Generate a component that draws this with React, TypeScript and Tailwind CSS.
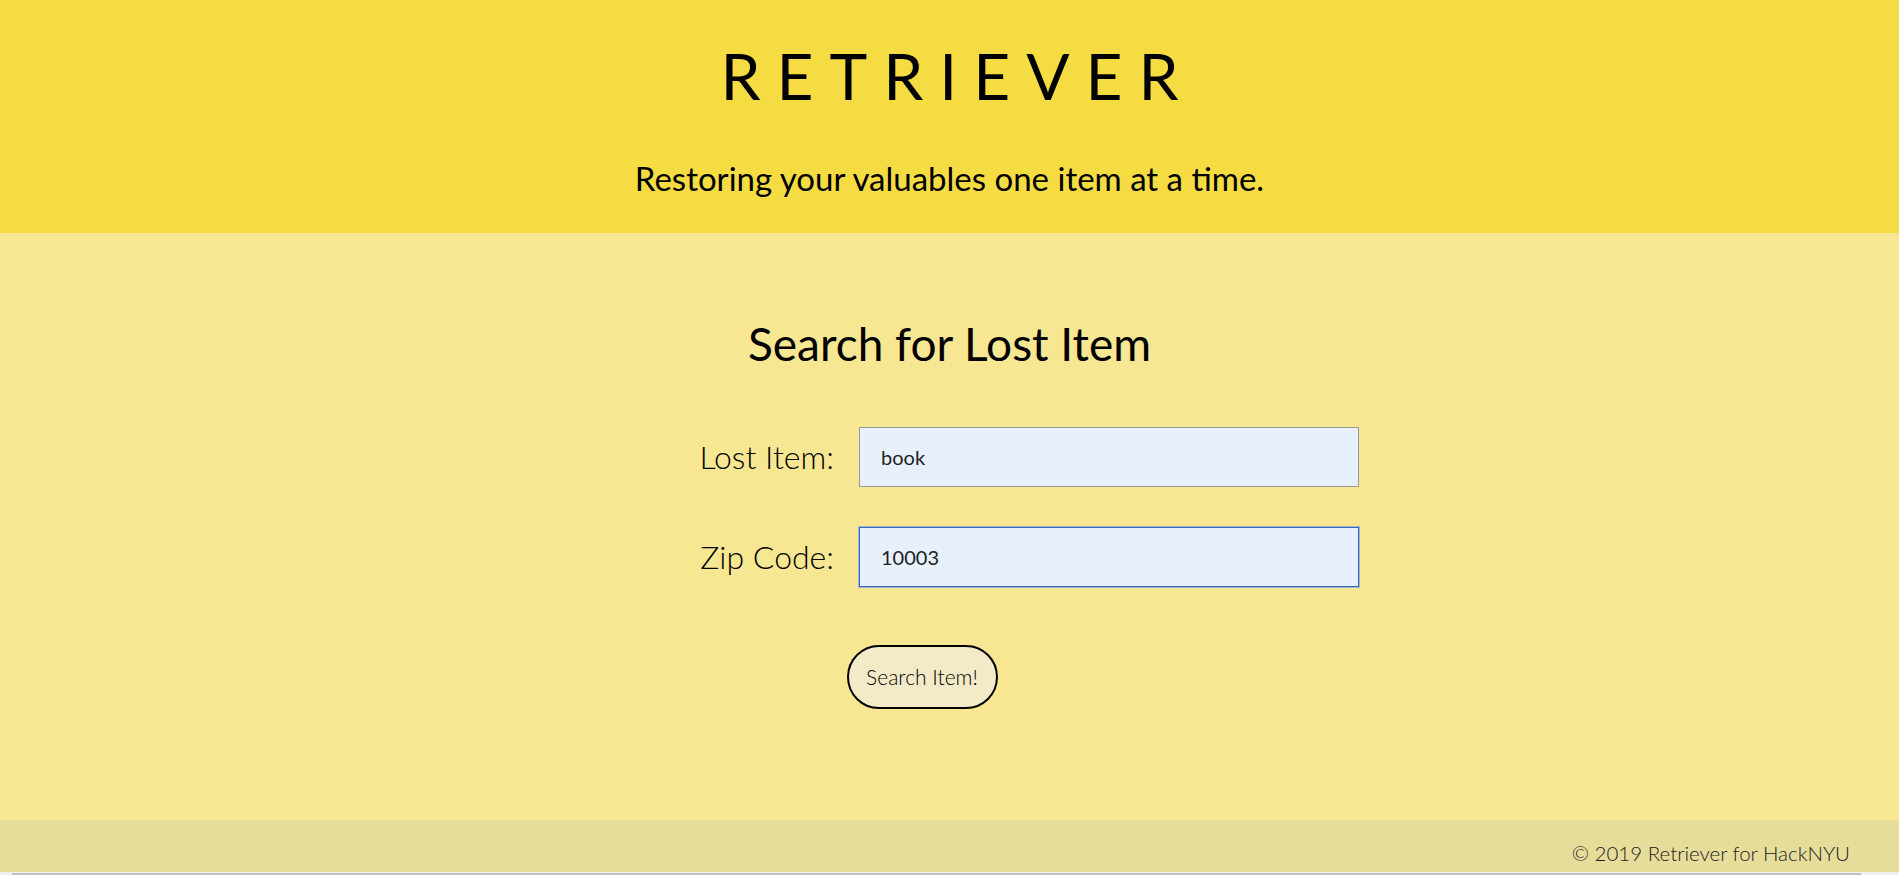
import React from "react";

export default function App() {
  const font = { fontFamily: "Lato, 'Open Sans', sans-serif" };
  return (
    <div className="w-full h-[875px] flex flex-col overflow-hidden" style={font}>
      <header className="h-[233px] bg-[#f5dc43] flex flex-col items-center text-black">
        <h1 className="mt-[37px] text-[64px] leading-[77px] font-normal tracking-[0.25em] pl-[0.25em]">RETRIEVER</h1>
        <p className="mt-[44px] text-[33px] leading-[40px]">Restoring your valuables one item at a time.</p>
      </header>
      <main className="flex-1 bg-[#f7e692] flex flex-col items-center">
        <h2 className="mt-[83px] text-[46px] leading-[55px] text-black">Search for Lost Item</h2>
        <div className="mt-[56px] grid grid-cols-[294px_500px] gap-x-[25px] gap-y-[40px] items-center">
          <label className="text-right text-[32px] font-light text-black">Lost Item:</label>
          <input
            readOnly
            value="book"
            className="h-[60px] bg-[#e8f0fe] border border-[#999999] px-[21px] text-[20px] text-[#222] outline-none"
            style={font}
          />
          <label className="text-right text-[32px] font-light text-black">Zip Code:</label>
          <input
            readOnly
            value="10003"
            className="h-[60px] bg-[#e8f0fe] border border-[#3d66b0] px-[21px] text-[20px] text-[#222] outline-none shadow-[0_0_0_1px_#9db4dc]"
            style={font}
          />
        </div>
        <div className="mt-[58px] w-full flex justify-center">
          <button className="mr-[55px] h-[64px] w-[151px] rounded-full border-2 border-black bg-[#f3eac7] text-[21px] font-light text-black" style={font}>
            Search Item!
          </button>
        </div>
      </main>
      <footer className="h-[52px] bg-[#e7dd9b] flex items-center justify-end pr-[49px] pt-[14px]">
        <span className="text-[20.5px] font-light text-[#222]">© 2019 Retriever for HackNYU</span>
      </footer>
      <div className="h-[3px] bg-[#efefef]">
        <div className="ml-[12px] w-[1849px] h-[2px] mt-[1px] bg-[#c1c1c1]" />
      </div>
    </div>
  );
}
